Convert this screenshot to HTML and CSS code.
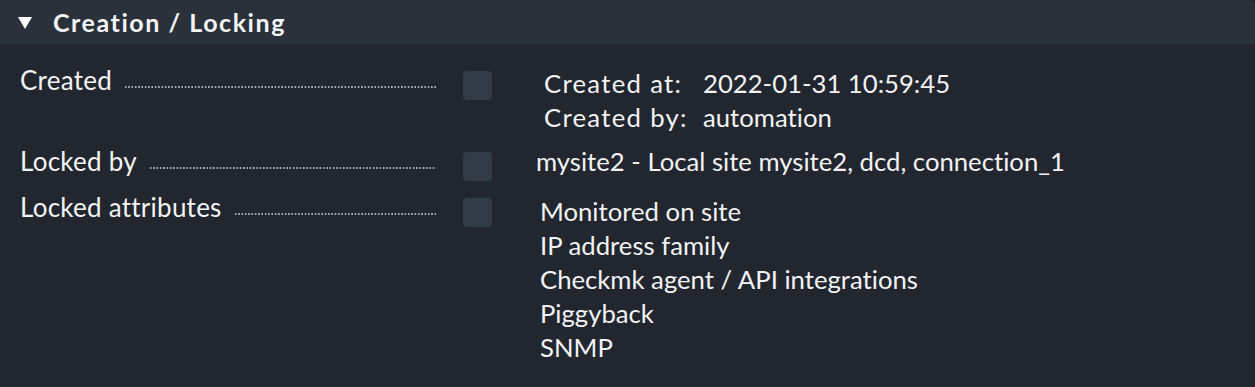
FILE: index.html
```html
<!DOCTYPE html>
<html>
<head>
<meta charset="utf-8">
<link rel="stylesheet" href="styles.css">
</head>
<body>
<div class="box">
  <div class="head">
    <span class="tri"></span>
    <span class="title">Creation / Locking</span>
  </div>
  <div class="body">
    <div class="row r1">
      <div class="legend"><span class="lbl">Created</span><span class="dots"></span></div>
      <div class="cbcell"><span class="cb"></span></div>
      <div class="val">
        <table class="kv">
          <tr><td class="k">Created at:</td><td>2022-01-31 10:59:45</td></tr>
          <tr><td class="k">Created by:</td><td>automation</td></tr>
        </table>
      </div>
    </div>
    <div class="row r2">
      <div class="legend"><span class="lbl">Locked by</span><span class="dots"></span></div>
      <div class="cbcell"><span class="cb"></span></div>
      <div class="val plain">mysite2 - Local site mysite2, dcd, connection_1</div>
    </div>
    <div class="row r3">
      <div class="legend"><span class="lbl">Locked attributes</span><span class="dots"></span></div>
      <div class="cbcell"><span class="cb"></span></div>
      <div class="val">
        <ul class="list">
          <li>Monitored on site</li>
          <li>IP address family</li>
          <li>Checkmk agent / API integrations</li>
          <li>Piggyback</li>
          <li>SNMP</li>
        </ul>
      </div>
    </div>
  </div>
</div>
</body>
</html>
```
FILE: styles.css
```css
html, body {
  margin: 0;
  padding: 0;
  background: #21262f;
}
body {
  font-family: Lato, "Open Sans", sans-serif;
  font-variant-ligatures: none;
  color: #f2f3f4;
  width: 1255px;
  height: 387px;
  overflow: hidden;
}
.box {
  background: #21262f;
}
.head {
  height: 44px;
  background: #2a313b;
  border-top-right-radius: 6px;
  display: flex;
  align-items: center;
  padding-left: 18px;
}
.tri {
  width: 0;
  height: 0;
  border-left: 7.5px solid transparent;
  border-right: 7.5px solid transparent;
  border-top: 12px solid #ffffff;
  margin-right: 21px;
  margin-top: 2px;
}
.title {
  font-weight: bold;
  font-size: 25px;
  line-height: 44px;
  letter-spacing: 1.55px;
  color: #f4f5f6;
}
.body {
  padding-top: 19px;
}
.row {
  display: flex;
  align-items: flex-start;
}
.legend {
  width: 416px;
  margin-left: 20px;
  display: flex;
  align-items: baseline;
  font-size: 26px;
  line-height: 34px;
  letter-spacing: 0.25px;
}
.lbl {
  white-space: nowrap;
}
.dots {
  flex: 1;
  height: 4px;
  margin-left: 12px;
  background-image: radial-gradient(circle at center, #a3a8af 1px, rgba(163, 168, 175, 0) 1.25px);
  background-size: 3.33px 2.4px;
  background-position: 0 0;
  background-repeat: repeat-x;
}
.cbcell {
  margin-left: 27px;
  padding-top: 8px;
}
.cb {
  display: block;
  width: 29px;
  height: 29px;
  border-radius: 4px;
  background: #333b46;
}
.val {
  margin-left: 44px;
  font-size: 25.7px;
  line-height: 34px;
}
.kv {
  border-collapse: collapse;
  margin: 3px 0 0 8px;
}
.kv td {
  padding: 0;
  height: 34px;
  line-height: 34px;
  white-space: nowrap;
}
.kv td.k {
  letter-spacing: 1.3px;
  width: 159px;
}
.r2 {
  margin-top: 10px;
}
.r3 {
  margin-top: 9px;
}
.list {
  list-style: none;
  margin: 4px 0 0 4px;
  padding: 0;
  line-height: 34px;
}
```
